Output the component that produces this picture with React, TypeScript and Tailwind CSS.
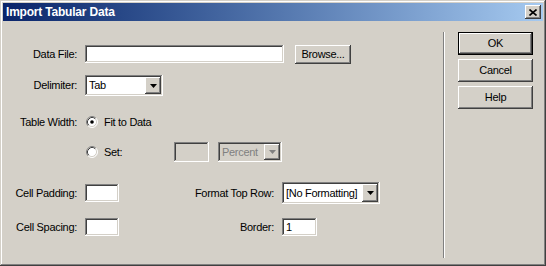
import React from 'react';

// classic 3D bevels
const raised =
  'shadow-[inset_-1px_-1px_#404040,inset_1px_1px_#ffffff,inset_-2px_-2px_#808080,inset_2px_2px_#d4d0c8]';
const sunken =
  'shadow-[inset_-1px_-1px_#ffffff,inset_1px_1px_#808080,inset_-2px_-2px_#d4d0c8,inset_2px_2px_#404040]';

const Arrow: React.FC<{ disabled?: boolean }> = ({ disabled }) => (
  <svg width="7" height="4" viewBox="0 0 7 4" className="block">
    <path d="M0 0h7L3.5 4z" fill={disabled ? '#808080' : '#000000'} />
  </svg>
);

interface ComboProps {
  value: string;
  className: string;
  disabled?: boolean;
}

const Combo: React.FC<ComboProps> = ({ value, className, disabled }) => (
  <div
    className={`${sunken} ${className} flex p-[2px] ${
      disabled ? 'bg-[#d4d0c8] text-[#808080]' : 'bg-white text-black'
    }`}
  >
    <span className="flex-1 flex items-center pl-[2px] whitespace-nowrap overflow-hidden">{value}</span>
    <span className={`${raised} w-[16px] h-full bg-[#d4d0c8] flex items-center justify-center`}>
      <Arrow disabled={disabled} />
    </span>
  </div>
);

const TextBox: React.FC<{ className: string; value?: string; disabled?: boolean }> = ({
  className,
  value,
  disabled,
}) => (
  <div
    className={`${sunken} ${className} flex items-center pl-[4px] ${
      disabled ? 'bg-[#d4d0c8]' : 'bg-white'
    }`}
  >
    {value}
  </div>
);

const Radio: React.FC<{ checked?: boolean }> = ({ checked }) => (
  <svg width="12" height="12" viewBox="0 0 12 12" className="block shrink-0">
    <circle cx="6" cy="6" r="5" fill="#ffffff" />
    <path d="M2.11 9.89A5.5 5.5 0 0 1 9.89 2.11" fill="none" stroke="#808080" />
    <path d="M9.89 2.11A5.5 5.5 0 0 1 2.11 9.89" fill="none" stroke="#ffffff" />
    <path d="M2.82 9.18A4.5 4.5 0 0 1 9.18 2.82" fill="none" stroke="#404040" />
    <path d="M9.18 2.82A4.5 4.5 0 0 1 2.82 9.18" fill="none" stroke="#d4d0c8" />
    {checked && <circle cx="6" cy="6" r="1.8" fill="#000000" />}
  </svg>
);

const Button: React.FC<{ label: string; isDefault?: boolean; className: string }> = ({
  label,
  isDefault,
  className,
}) =>
  isDefault ? (
    <div className={`${className} border border-black flex`}>
      <div className={`${raised} flex-1 flex items-center justify-center`}>{label}</div>
    </div>
  ) : (
    <div className={`${raised} ${className} flex items-center justify-center`}>{label}</div>
  );

const TitleBar: React.FC = () => (
  <div className="h-[18px] flex items-center bg-gradient-to-r from-[#0a246a] to-[#a6caf0] pl-[3px] pr-[2px]">
    <span className="flex-1 text-white font-bold text-[12px] leading-none tracking-[-0.2px]">
      Import Tabular Data
    </span>
    <div className={`${raised} w-[16px] h-[14px] bg-[#d4d0c8] flex items-center justify-center`}>
      <svg width="8" height="7" viewBox="0 0 8 7" className="block">
        <path d="M0.5 0.5L7.5 6.5M7.5 0.5L0.5 6.5" stroke="#000000" strokeWidth="1.6" />
      </svg>
    </div>
  </div>
);

export default function App() {
  return (
    <div
      className="w-[546px] h-[266px] bg-[#d4d0c8] p-[3px] flex flex-col text-[11px] tracking-[-0.3px] text-black font-['Liberation_Sans',Arial,sans-serif] shadow-[inset_-1px_-1px_#404040,inset_1px_1px_#d4d0c8,inset_-2px_-2px_#808080,inset_2px_2px_#ffffff]"
    >
      <TitleBar />
      <div className="flex flex-1">
        {/* form */}
        <div className="w-[440px] flex flex-col">
          <div className="mt-[23px] h-[20px] flex items-center">
            <span className="w-[74px] text-right">Data File:</span>
            <TextBox className="ml-2 w-[199px] h-[18px]" />
            <Button label="Browse..." className="ml-[11px] w-[56px] h-[19px]" />
          </div>

          <div className="mt-[11px] h-[21px] flex items-center">
            <span className="w-[74px] text-right">Delimiter:</span>
            <Combo value="Tab" className="ml-2 w-[78px] h-[21px]" />
          </div>

          <div className="mt-[18px] h-[16px] flex items-center">
            <span className="w-[74px] text-right">Table Width:</span>
            <span className="ml-[9px]">
              <Radio checked />
            </span>
            <span className="ml-[6px]">Fit to Data</span>
          </div>

          <div className="mt-[12px] h-[20px] flex items-center">
            <span className="w-[74px]" />
            <span className="ml-[9px]">
              <Radio />
            </span>
            <span className="ml-[6px] w-[70px]">Set:</span>
            <TextBox className="w-[35px] h-[20px]" disabled />
            <Combo value="Percent" disabled className="ml-[9px] w-[64px] h-[20px]" />
          </div>

          <div className="mt-[20px] h-[22px] flex items-center">
            <span className="w-[74px] text-right">Cell Padding:</span>
            <TextBox className="ml-2 w-[34px] h-[18px]" />
            <span className="w-[155px] text-right">Format Top Row:</span>
            <Combo value="[No Formatting]" className="ml-2 w-[98px] h-[22px]" />
          </div>

          <div className="mt-[14px] h-[18px] flex items-center">
            <span className="w-[74px] text-right">Cell Spacing:</span>
            <TextBox className="ml-2 w-[34px] h-[18px]" />
            <span className="w-[155px] text-right">Border:</span>
            <TextBox value="1" className="ml-2 w-[35px] h-[18px]" />
          </div>
        </div>

        {/* separator */}
        <div className="w-[2px] mt-[11px] mb-[5px] border-l border-l-[#808080] border-r border-r-white" />

        {/* buttons */}
        <div className="ml-[13px] mt-[11px] flex flex-col gap-[4px]">
          <Button label="OK" isDefault className="w-[75px] h-[23px]" />
          <Button label="Cancel" className="w-[75px] h-[23px]" />
          <Button label="Help" className="w-[75px] h-[23px]" />
        </div>
      </div>
    </div>
  );
}
